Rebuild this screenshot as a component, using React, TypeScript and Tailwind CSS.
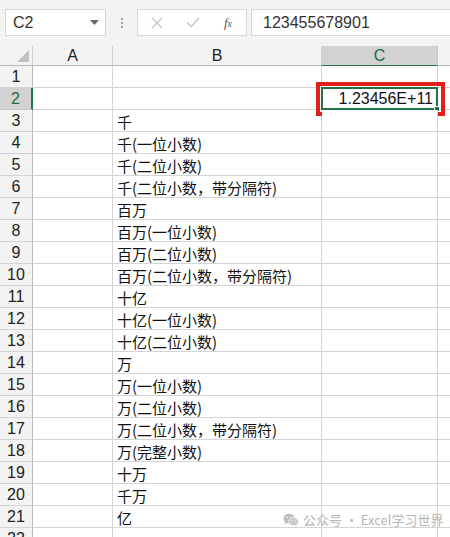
import React from "react";

const rows: { n: number; b?: string; c?: string }[] = [
  { n: 1 },
  { n: 2, c: "1.23456E+11" },
  { n: 3, b: "千" },
  { n: 4, b: "千(一位小数)" },
  { n: 5, b: "千(二位小数)" },
  { n: 6, b: "千(二位小数，带分隔符)" },
  { n: 7, b: "百万" },
  { n: 8, b: "百万(一位小数)" },
  { n: 9, b: "百万(二位小数)" },
  { n: 10, b: "百万(二位小数，带分隔符)" },
  { n: 11, b: "十亿" },
  { n: 12, b: "十亿(一位小数)" },
  { n: 13, b: "十亿(二位小数)" },
  { n: 14, b: "万" },
  { n: 15, b: "万(一位小数)" },
  { n: 16, b: "万(二位小数)" },
  { n: 17, b: "万(二位小数，带分隔符)" },
  { n: 18, b: "万(完整小数)" },
  { n: 19, b: "十万" },
  { n: 20, b: "千万" },
  { n: 21, b: "亿" },
  { n: 22 },
];

const cellFont = { fontFamily: '"Noto Sans CJK SC", "Liberation Sans", sans-serif' };
const uiFont = { fontFamily: '"Liberation Sans", "Noto Sans CJK SC", sans-serif' };

function WeChatIcon() {
  return (
    <svg width="16" height="14" viewBox="0 0 16 14" className="shrink-0">
      <ellipse cx="6" cy="5.5" rx="5.6" ry="4.8" fill="#bdbdbd" />
      <path d="M2.4 9 L1.6 11.4 L4.6 9.8 Z" fill="#bdbdbd" />
      <ellipse cx="10.6" cy="8.6" rx="4.9" ry="4.1" fill="#c9c9c9" stroke="#f7f7f7" strokeWidth="0.9" />
      <path d="M13.2 11.8 L14 13.6 L11.6 12.4 Z" fill="#c9c9c9" />
      <circle cx="4" cy="4.2" r="0.8" fill="#f5f5f5" />
      <circle cx="7.6" cy="4.2" r="0.8" fill="#f5f5f5" />
      <circle cx="9" cy="7.8" r="0.65" fill="#f5f5f5" />
      <circle cx="12.2" cy="7.8" r="0.65" fill="#f5f5f5" />
    </svg>
  );
}

export default function App() {
  return (
    <div className="w-[450px] h-[537px] overflow-hidden bg-[#f3f3f3] relative" style={uiFont}>
      {/* formula bar */}
      <div className="h-[46px] flex items-start pt-[9px] pl-[5px]">
        <div className="w-[101px] h-[27px] bg-white border border-[#d6d6d6] flex items-center justify-between pl-[7px] pr-[6px]">
          <span className="text-[16px] text-[#333]">C2</span>
          <svg width="9" height="5" viewBox="0 0 9 5">
            <path d="M0 0 L9 0 L4.5 5 Z" fill="#6b6b6b" />
          </svg>
        </div>
        <div className="w-[31px] h-[27px] flex flex-col items-center justify-center gap-[2px]">
          <span className="w-[2px] h-[2px] bg-[#a0a0a0]" />
          <span className="w-[2px] h-[2px] bg-[#a0a0a0]" />
          <span className="w-[2px] h-[2px] bg-[#a0a0a0]" />
        </div>
        <div className="w-[110px] h-[27px] bg-white border border-[#d6d6d6] flex items-center">
          <div className="w-[38px] flex justify-center">
            <svg width="12" height="12" viewBox="0 0 12 12">
              <path d="M1 1 L11 11 M11 1 L1 11" stroke="#c4c4c4" strokeWidth="1.3" />
            </svg>
          </div>
          <div className="w-[34px] flex justify-center">
            <svg width="14" height="11" viewBox="0 0 14 11">
              <path d="M1 5.5 L5 9.5 L13 1" stroke="#c4c4c4" strokeWidth="1.4" fill="none" />
            </svg>
          </div>
          <div className="flex-1 flex justify-center">
            <span className="text-[13px] italic text-[#555]" style={{ fontFamily: '"Liberation Serif", serif' }}>
              f<span className="text-[10px]">x</span>
            </span>
          </div>
        </div>
        <div className="ml-[4px] flex-1 h-[27px] bg-white border border-[#d6d6d6] border-r-0 flex items-center pl-[11px]">
          <span className="text-[16px] text-[#333]">123455678901</span>
        </div>
      </div>

      {/* column headers */}
      <div className="flex h-[20px] bg-[#f3f3f3] border-b border-[#b8b8b8]">
        <div className="w-[33px] h-full border-r border-[#d4d4d4] relative">
          <svg width="12" height="12" viewBox="0 0 12 12" className="absolute right-[3px] bottom-[3px]">
            <path d="M12 0 L12 12 L0 12 Z" fill="#c2c2c2" />
          </svg>
        </div>
        <div className="w-[80px] h-full border-r border-[#d4d4d4] flex items-center justify-center text-[16px] text-[#222]">A</div>
        <div className="w-[209px] h-full border-r border-[#d4d4d4] flex items-center justify-center text-[16px] text-[#222]">B</div>
        <div className="w-[116px] h-[21px] bg-[#d2d2d2] border-r border-[#c6c6c6] border-b-2 border-b-[#217346] flex items-center justify-center text-[16px] text-[#1e6b41]">C</div>
        <div className="flex-1 h-full" />
      </div>

      {/* grid */}
      <div className="flex flex-col" style={cellFont}>
        {rows.map((r) => {
          const active = r.n === 2;
          return (
            <div key={r.n} className="flex h-[22px] shrink-0">
              <div
                className={
                  active
                    ? "w-[33px] h-full bg-[#d2d2d2] border-r-2 border-r-[#217346] border-b border-b-[#c6c6c6] flex items-center justify-center text-[16px] text-[#1e6b41]"
                    : "w-[33px] h-full bg-[#f3f3f3] border-r border-r-[#b8b8b8] border-b border-b-[#d4d4d4] flex items-center justify-center text-[16px] text-[#222]"
                }
                style={uiFont}
              >
                {r.n}
              </div>
              <div className="w-[80px] h-full bg-white border-r border-b border-[#d4d4d4]" />
              <div className="w-[209px] h-full bg-white border-r border-b border-[#d4d4d4] flex items-center pl-[4px] text-[15px] text-[#111] whitespace-nowrap leading-none pt-[1px]">
                {r.b}
              </div>
              <div
                className="w-[116px] h-full bg-white border-r border-b border-[#d4d4d4] relative flex items-center justify-end pr-[4px] text-[16px] text-[#111] leading-none pt-[1px]"
                style={uiFont}
              >
                {r.c}
                {active && (
                  <>
                    <div className="absolute left-[-6px] top-[-6px] right-[-8px] bottom-[-7px] border-[4px] border-[#e0201b] pointer-events-none" />
                    <div className="absolute left-[-1px] top-[-1px] right-[-1px] bottom-[-1px] border-2 border-[#217346] pointer-events-none" />
                    <div className="absolute right-[-3px] bottom-[-3px] w-[6px] h-[6px] bg-[#217346] border border-white" />
                  </>
                )}
              </div>
              <div className="flex-1 h-full bg-white border-b border-[#d4d4d4]" />
            </div>
          );
        })}
      </div>

      {/* watermark */}
      <div className="absolute left-[283px] top-[510px] flex items-center gap-[4px]">
        <WeChatIcon />
        <span className="text-[13px] text-[#b5b5b5] whitespace-nowrap" style={cellFont}>
          公众号 · Excel学习世界
        </span>
      </div>
    </div>
  );
}
